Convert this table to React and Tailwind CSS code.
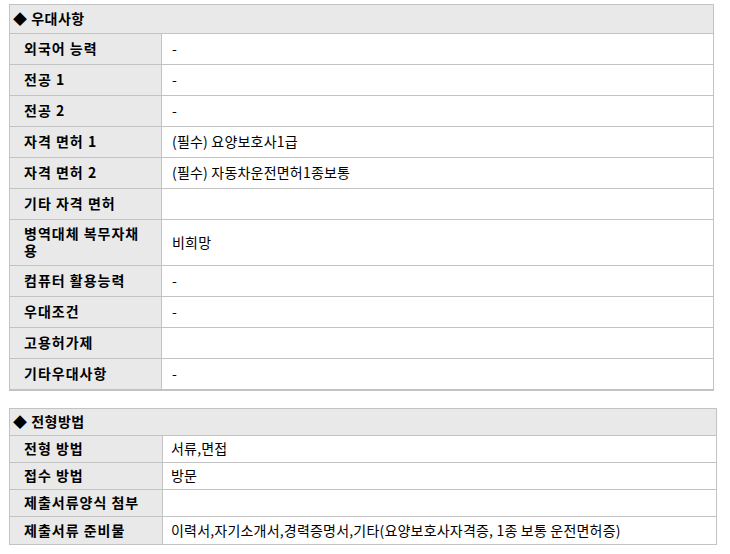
export default function App() {
  const rows1 = [
    ["외국어 능력", "-"],
    ["전공 1", "-"],
    ["전공 2", "-"],
    ["자격 면허 1", "(필수) 요양보호사1급"],
    ["자격 면허 2", "(필수) 자동차운전면허1종보통"],
    ["기타 자격 면허", ""],
    ["병역대체 복무자채용", "비희망", "h-[46px]"],
    ["컴퓨터 활용능력", "-"],
    ["우대조건", "-"],
    ["고용허가제", ""],
    ["기타우대사항", "-", "h-[30px]", true],
  ];
  const rows2 = [
    ["전형 방법", "서류,면접"],
    ["접수 방법", "방문"],
    ["제출서류양식 첨부", ""],
    ["제출서류 준비물", "이력서,자기소개서,경력증명서,기타(요양보호사자격증, 1종 보통 운전면허증)", "h-[27px]", true],
  ];
  return (
    <div className="min-h-[554px] bg-white pl-[9px] pt-[4px] text-[14px] text-black font-['Noto_Sans_CJK_KR',sans-serif] leading-[17px]">
      <div className="w-[705px] border border-b-2 border-[#c3c3c3]">
        <div className="flex h-[29px] items-center border-b border-[#c3c3c3] bg-[#e9e9e9] pb-[1px] pl-[3px] font-bold tracking-[0.5px]">
          ◆ 우대사항
        </div>
        {rows1.map(([label, value, h, last], i) => (
          <div
            key={i}
            className={`grid grid-cols-[152px_1fr] ${h || "h-[31px]"} ${last ? "" : "border-b border-[#c3c3c3]"}`}
          >
            <div className="flex items-center border-r border-[#c3c3c3] bg-[#e9e9e9] pb-[1px] pl-[14px] pr-[15px] font-bold tracking-[1px]">
              {label}
            </div>
            <div className="flex items-center pb-[1px] pl-[10px] tracking-[0.2px]">{value}</div>
          </div>
        ))}
      </div>

      <div className="mt-[17px] w-[708px] border border-[#c3c3c3]">
        <div className="flex h-[27px] items-center border-b border-[#c3c3c3] bg-[#e9e9e9] pb-[1px] pl-[3px] font-bold tracking-[0.5px]">
          ◆ 전형방법
        </div>
        {rows2.map(([label, value, h, last], i) => (
          <div
            key={i}
            className={`grid grid-cols-[153px_1fr] ${h || "h-[27px]"} ${last ? "" : "border-b border-[#c3c3c3]"}`}
          >
            <div className="flex items-center border-r border-[#c3c3c3] bg-[#e9e9e9] pb-[1px] pl-[14px] font-bold tracking-[1px]">
              {label}
            </div>
            <div className="flex items-center pb-[1px] pl-[8px] tracking-[0.2px]">{value}</div>
          </div>
        ))}
      </div>
    </div>
  );
}
